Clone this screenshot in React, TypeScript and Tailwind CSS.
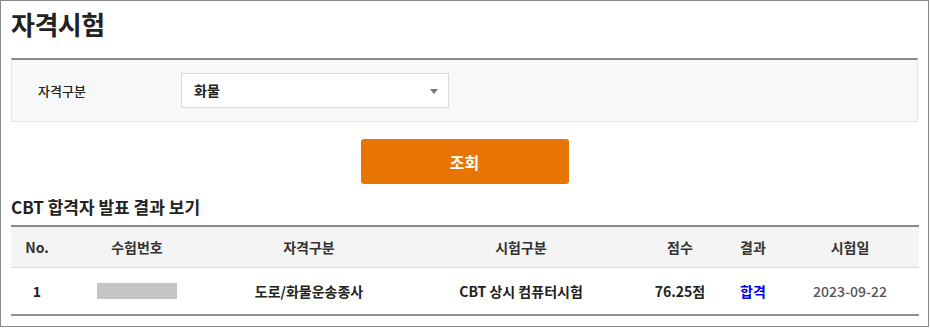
import { ChevronDown } from 'lucide-react';

const columns = [
  { label: 'No.', w: 'w-[52px]' },
  { label: '수험번호', w: 'w-[148px]' },
  { label: '자격구분', w: 'w-[196px]' },
  { label: '시험구분', w: 'w-[228px]' },
  { label: '점수', w: 'w-[90px]' },
  { label: '결과', w: 'w-[56px]' },
  { label: '시험일', w: 'w-[138px]' },
];

export default function App() {
  return (
    <div
      className="w-[929px] h-[327px] border border-[#8a8a8a] bg-white text-[#222] overflow-hidden"
      style={{ fontFamily: '"Noto Sans CJK KR", "Noto Sans", sans-serif' }}
    >
      <div className="px-[10px]">
        {/* Page title */}
        <h1 className="pt-[5px] h-[57px] text-[26px] font-bold leading-[36px] tracking-[-0.5px] text-[#222]">
          자격시험
        </h1>

        {/* Search filter */}
        <div className="h-[64px] border-t-2 border-t-[#8a8a8a] border-x border-b border-[#e3e4e6] bg-[#f7f8fa] flex items-center">
          <span className="w-[169px] pl-[26px] text-[13px] font-medium text-[#222]">자격구분</span>
          <div className="w-[268px] h-[35px] bg-white border border-[#d9d9d9] flex items-center justify-between pl-[12px] pr-[10px]">
            <span className="text-[14px] font-bold">화물</span>
            <svg width="8" height="5" viewBox="0 0 8 5" className="mt-[1px]">
              <path d="M0 0H8L4 5Z" fill="#777" />
            </svg>
          </div>
        </div>

        {/* Search button */}
        <div className="flex justify-center pt-[17px]">
          <button className="w-[208px] h-[45px] rounded-[3px] bg-[#e87503] text-white text-[16px] font-bold">
            조회
          </button>
        </div>

        {/* Results */}
        <h2 className="pt-[11px] h-[41px] text-[17px] font-bold leading-[24px] text-[#222]">
          CBT 합격자 발표 결과 보기
        </h2>
        <div className="w-[908px] border-t-2 border-[#8a8a8a]">
          <div className="flex h-[41px] bg-[#f4f4f4] border-b border-[#dcdcdc] text-[14px] font-bold text-[#333]">
            {columns.map((c) => (
              <div key={c.label} className={`${c.w} flex items-center justify-center`}>
                {c.label}
              </div>
            ))}
          </div>
          <div className="flex h-[48px] border-b-2 border-[#8f8f8f] text-[14px] font-bold text-[#222]">
            <div className="w-[52px] flex items-center justify-center">1</div>
            <div className="w-[148px] flex items-center justify-center">
              <div className="w-[80px] h-[16px] bg-[#c4c4c4]" />
            </div>
            <div className="w-[196px] flex items-center justify-center">도로/화물운송종사</div>
            <div className="w-[228px] flex items-center justify-center">CBT 상시 컴퓨터시험</div>
            <div className="w-[90px] flex items-center justify-center">76.25점</div>
            <div className="w-[56px] flex items-center justify-center text-[#0000ee]">합격</div>
            <div className="w-[138px] flex items-center justify-center font-medium text-[#555]">2023-09-22</div>
          </div>
        </div>
      </div>
    </div>
  );
}
